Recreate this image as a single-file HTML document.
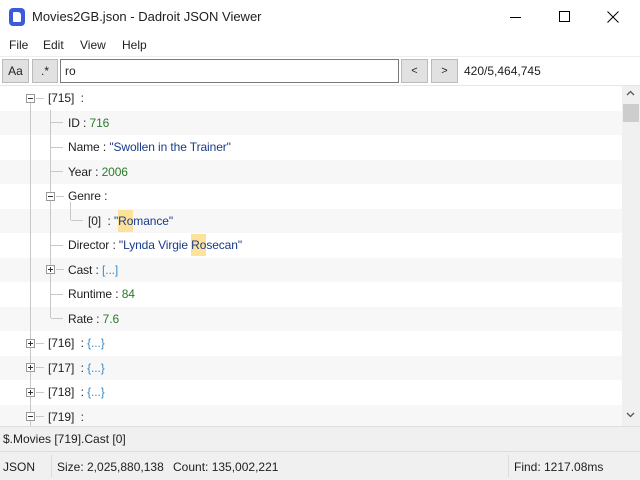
<!DOCTYPE html>
<html><head><style>
*{margin:0;padding:0;box-sizing:border-box}
body{width:640px;height:480px;overflow:hidden;background:#fff;font-family:"Liberation Sans",sans-serif;font-size:12px;color:#1e1e1e;position:relative}
.a{position:absolute}
.row{position:absolute;left:0;width:622px;height:24.5px}
.g{background:#f7f7f7}
.t{position:absolute;line-height:24px;white-space:nowrap;letter-spacing:-0.1px}
.n{color:#2a7a2a}.s{color:#1a3a8a}.b{color:#3a8ac8}
.hl{background:#fde29a;padding:4px 0}
.vl{position:absolute;width:1px;background:#c8c8c8}
.hlin{position:absolute;height:1px;background:#c8c8c8}
.box{position:absolute;width:9px;height:9px;border:1px solid #999;background:#fff}
.box:before{content:"";position:absolute;left:1px;top:3px;width:5px;height:1px;background:#333}
.box.p:after{content:"";position:absolute;left:3px;top:1px;width:1px;height:5px;background:#333}
.btn{position:absolute;top:59px;height:24px;background:#e1e1e1;border:1px solid #bbb;text-align:center;line-height:22px}
</style></head><body>
<div class="a" style="left:9px;top:8px;width:16px;height:18px;background:#3b5bdb;border-radius:4px"></div>
<div class="a" style="left:13px;top:12px;width:8px;height:10px;background:#fff;border-radius:1px 3px 1px 1px"></div>
<div class="a" style="left:32px;top:9px;font-size:13px">Movies2GB.json - Dadroit JSON Viewer</div>
<div class="a" style="left:510px;top:17px;width:11px;height:1px;background:#000"></div>
<div class="a" style="left:559px;top:11px;width:11px;height:11px;border:1px solid #000"></div>
<svg class="a" style="left:607px;top:11px" width="12" height="12"><path d="M0.5 0.5L11.5 11.5M11.5 0.5L0.5 11.5" stroke="#000" stroke-width="1"/></svg>
<div class="a" style="left:9px;top:38px">File</div>
<div class="a" style="left:43px;top:38px">Edit</div>
<div class="a" style="left:80px;top:38px">View</div>
<div class="a" style="left:122px;top:38px">Help</div>
<div class="a" style="left:0;top:56px;width:640px;height:30px;background:#fff;border-top:1px solid #eee"></div>
<div class="btn" style="left:2px;width:27px">Aa</div>
<div class="btn" style="left:32px;width:26px">.*</div>
<div class="a" style="left:60px;top:59px;width:339px;height:24px;border:1px solid #7a7a7a;padding:3px 4px;line-height:16px">ro</div>
<div class="btn" style="left:401px;width:27px;font-size:11px">&lt;</div>
<div class="btn" style="left:431px;width:27px;font-size:11px">&gt;</div>
<div class="a" style="left:464px;top:64px">420/5,464,745</div>
<div class="a" style="left:0;top:85px;width:640px;height:1px;background:#e6e6e6"></div>

<div class="row" style="top:86px"></div>
<div class="row g" style="top:110.5px"></div>
<div class="row g" style="top:159.5px"></div>
<div class="row g" style="top:208.5px"></div>
<div class="row g" style="top:257.5px"></div>
<div class="row g" style="top:306.5px"></div>
<div class="row g" style="top:355.5px"></div>
<div class="row g" style="top:404.5px"></div>

<div class="vl" style="left:30px;top:103px;height:323px"></div>
<div class="vl" style="left:50px;top:110px;height:208px"></div>
<div class="vl" style="left:70px;top:202px;height:18px"></div>
<div class="hlin" style="left:36px;top:98px;width:8px"></div>
<div class="hlin" style="left:51px;top:122px;width:12px"></div>
<div class="hlin" style="left:51px;top:147px;width:12px"></div>
<div class="hlin" style="left:51px;top:171px;width:12px"></div>
<div class="hlin" style="left:56px;top:196px;width:8px"></div>
<div class="hlin" style="left:71px;top:220px;width:12px"></div>
<div class="hlin" style="left:51px;top:245px;width:12px"></div>
<div class="hlin" style="left:56px;top:269px;width:8px"></div>
<div class="hlin" style="left:51px;top:294px;width:12px"></div>
<div class="hlin" style="left:51px;top:318px;width:12px"></div>
<div class="hlin" style="left:36px;top:343px;width:8px"></div>
<div class="hlin" style="left:36px;top:367px;width:8px"></div>
<div class="hlin" style="left:36px;top:392px;width:8px"></div>
<div class="hlin" style="left:36px;top:416px;width:8px"></div>

<div class="box" style="left:26px;top:94px"></div>
<div class="box" style="left:46px;top:192px"></div>
<div class="box p" style="left:46px;top:265px"></div>
<div class="box p" style="left:26px;top:339px"></div>
<div class="box p" style="left:26px;top:363px"></div>
<div class="box p" style="left:26px;top:388px"></div>
<div class="box" style="left:26px;top:412px"></div>

<div class="t" style="left:48px;top:86px">[715] &nbsp;:</div>
<div class="t" style="left:68px;top:110.5px">ID : <span class="n">716</span></div>
<div class="t" style="left:68px;top:135px">Name : <span class="s">"Swollen in the Trainer"</span></div>
<div class="t" style="left:68px;top:159.5px">Year : <span class="n">2006</span></div>
<div class="t" style="left:68px;top:184px">Genre :</div>
<div class="t" style="left:88px;top:208.5px">[0] &nbsp;: <span class="s">"<span class="hl">Ro</span>mance"</span></div>
<div class="t" style="left:68px;top:233px">Director : <span class="s">"Lynda Virgie <span class="hl">Ro</span>secan"</span></div>
<div class="t" style="left:68px;top:257.5px">Cast : <span class="b">[...]</span></div>
<div class="t" style="left:68px;top:282px">Runtime : <span class="n">84</span></div>
<div class="t" style="left:68px;top:306.5px">Rate : <span class="n">7.6</span></div>
<div class="t" style="left:48px;top:331px">[716] &nbsp;: <span class="b">{...}</span></div>
<div class="t" style="left:48px;top:355.5px">[717] &nbsp;: <span class="b">{...}</span></div>
<div class="t" style="left:48px;top:380px">[718] &nbsp;: <span class="b">{...}</span></div>
<div class="t" style="left:48px;top:404.5px">[719] &nbsp;:</div>

<div class="a" style="left:622px;top:86px;width:18px;height:340px;background:#f0f0f0"></div>
<div class="a" style="left:623px;top:104px;width:16px;height:18px;background:#cdcdcd"></div>
<svg class="a" style="left:626px;top:90px" width="9" height="6"><path d="M1 5L4.5 1.5L8 5" stroke="#555" fill="none" stroke-width="1.3"/></svg>
<svg class="a" style="left:626px;top:412px" width="9" height="6"><path d="M1 1L4.5 4.5L8 1" stroke="#555" fill="none" stroke-width="1.3"/></svg>

<div class="a" style="left:0;top:426px;width:640px;height:26px;background:#f0f0f0;border-top:1px solid #ddd;border-bottom:1px solid #ddd"></div>
<div class="a" style="left:3px;top:432px">$.Movies [719].Cast [0]</div>
<div class="a" style="left:0;top:452px;width:640px;height:28px;background:#f0f0f0"></div>
<div class="a" style="left:3px;top:460px">JSON</div>
<div class="a" style="left:51px;top:455px;width:1px;height:22px;background:#ddd"></div>
<div class="a" style="left:57px;top:460px">Size: 2,025,880,138</div>
<div class="a" style="left:173px;top:460px">Count: 135,002,221</div>
<div class="a" style="left:508px;top:455px;width:1px;height:22px;background:#ddd"></div>
<div class="a" style="left:514px;top:460px">Find: 1217.08ms</div>
</body></html>
